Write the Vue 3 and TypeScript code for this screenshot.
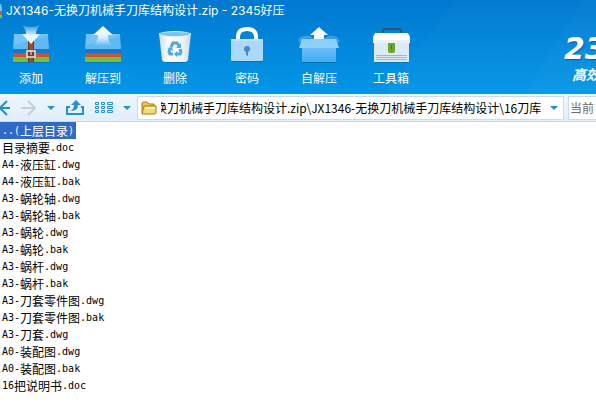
<script setup lang="ts">
import { nextTick, onMounted, ref } from 'vue'

interface Run {
  text: string
  latin: boolean
}

const tools = [
  { id: 'add', label: '添加' },
  { id: 'extract', label: '解压到' },
  { id: 'delete', label: '删除' },
  { id: 'password', label: '密码' },
  { id: 'sfx', label: '自解压' },
  { id: 'toolbox', label: '工具箱' },
]

const files = [
  '..(上层目录)',
  '目录摘要.doc',
  'A4-液压缸.dwg',
  'A4-液压缸.bak',
  'A3-蜗轮轴.dwg',
  'A3-蜗轮轴.bak',
  'A3-蜗轮.dwg',
  'A3-蜗轮.bak',
  'A3-蜗杆.dwg',
  'A3-蜗杆.bak',
  'A3-刀套零件图.dwg',
  'A3-刀套零件图.bak',
  'A3-刀套.dwg',
  'A0-装配图.dwg',
  'A0-装配图.bak',
  '16把说明书.doc',
]

// Latin runs get a half-width face so that two letters fill one Chinese cell
function runs(name: string): Run[] {
  return (name.match(/[\x00-\x7f]+|[^\x00-\x7f]+/g) ?? []).map((text) => ({
    text,
    latin: text.charCodeAt(0) < 128,
  }))
}

const selected = ref(0)
const path = ref('换刀机械手刀库结构设计.zip\\JX1346-无换刀机械手刀库结构设计\\16刀库')
const search = ref('')
const pathInput = ref<HTMLInputElement | null>(null)

// keep the deepest folder of the path in view
onMounted(async () => {
  await nextTick()
  if (pathInput.value) pathInput.value.scrollLeft = pathInput.value.scrollWidth
})
</script>

<template>
  <div class="window">
    <header class="banner">
      <svg class="sheen" viewBox="0 0 596 94" preserveAspectRatio="none" aria-hidden="true">
        <path d="M455 0H596V94H385Z" fill="#fff" opacity=".02" />
        <path d="M582 0H596V94H525Z" fill="#fff" opacity=".02" />
      </svg>
      <div class="title">
        <svg class="app-icon" width="2" height="14" viewBox="0 0 2 14" aria-hidden="true">
          <path d="M0 0h1l1 4v3H0z" fill="#6fc5f7" />
          <path d="M0 7h2v4H0z" fill="#c65b3c" />
          <path d="M0 11h2v3H0z" fill="#7fc43f" />
        </svg>
        <h1>JX1346-无换刀机械手刀库结构设计.zip - 2345好压</h1>
      </div>
      <div class="tools-row">
        <nav class="tools">
          <button v-for="tool in tools" :key="tool.id" type="button" class="tool">
            <svg width="48" height="44" viewBox="0 0 48 44" aria-hidden="true">
              <defs>
                <linearGradient id="arrowDown" x1="0" y1="0" x2="0" y2="1">
                  <stop offset="0" stop-color="#fff" stop-opacity=".15" />
                  <stop offset=".6" stop-color="#e8f6ff" />
                  <stop offset="1" stop-color="#fff" />
                </linearGradient>
                <linearGradient id="arrowUp" x1="0" y1="0" x2="0" y2="1">
                  <stop offset="0" stop-color="#fff" />
                  <stop offset=".5" stop-color="#e3f3fe" />
                  <stop offset="1" stop-color="#fff" stop-opacity=".1" />
                </linearGradient>
                <linearGradient id="bin" x1="0" y1="0" x2="1" y2="0">
                  <stop offset="0" stop-color="#d5dde5" />
                  <stop offset=".3" stop-color="#fbfdff" />
                  <stop offset=".75" stop-color="#eef3f8" />
                  <stop offset="1" stop-color="#cbd7e2" />
                </linearGradient>
                <linearGradient id="carton" x1="0" y1="0" x2="0" y2="1">
                  <stop offset="0" stop-color="#6cc0f8" />
                  <stop offset="1" stop-color="#43a9ef" />
                </linearGradient>
              </defs>

              <g v-if="tool.id === 'add' || tool.id === 'extract'">
                <path d="M6 40h36v1H6z" fill="#0567ae" opacity=".6" />
                <path d="M7 12h34l1 15H6z" fill="#5eb9f5" />
                <path d="M7 12h34v2L7 23z" fill="#8bd0fc" opacity=".5" />
                <path d="M6 27h36v4H6z" fill="#1479c9" />
                <path d="M6 31h36v4H6z" fill="#c65635" />
                <path d="M6 35h36v5H6z" fill="#78bd3c" />
              </g>

              <g v-if="tool.id === 'add'">
                <path d="M21 19h6v21h-6z" fill="#9a4c2b" />
                <path d="M21 19h1v21h-1zM26 19h1v21h-1z" fill="#743518" />
                <rect x="20" y="29" width="8" height="6" fill="#713c2c" stroke="#e7e7e7" stroke-width="1.5" />
                <path d="M24 29v4" stroke="#eee" stroke-width="1" />
                <path d="M15 3q4 2 9 2t9-2q-4 4-4 9h4l-9 10-9-10h4q0-5-4-9z" fill="url(#arrowDown)" />
              </g>

              <path
                v-else-if="tool.id === 'extract'"
                d="M24 4l10 9h-5q0 7 4 10H15q4-3 4-10h-5z"
                fill="url(#arrowUp)"
              />

              <g v-else-if="tool.id === 'delete'">
                <path d="M12 39h24l-2 2H14z" fill="#0862a6" opacity=".6" />
                <path d="M8 11h32l-3 27q-1 2-3 2H14q-2 0-3-2z" fill="url(#bin)" />
                <ellipse cx="24" cy="12" rx="16" ry="3" fill="#d9effb" />
                <ellipse cx="24" cy="12" rx="15" ry="2" fill="#74c6ee" />
                <g fill="none" stroke="#50a8e3" stroke-width="3">
                  <path d="M20 25l2-4h4l2 3" />
                  <path d="M29 27l1 3-1 2h-3" />
                  <path d="M22 32h-3l-1-2 1-3" />
                </g>
                <path d="M30 21v5h-5zM26 29v6l-3-3zM16 26l5-1 1 4z" fill="#50a8e3" />
              </g>

              <g v-else-if="tool.id === 'password'">
                <path d="M8 39h32v1H8z" fill="#0562a9" opacity=".6" />
                <path d="M15 18v-3q0-8 9-8t9 8v3" fill="none" stroke="#fff" stroke-width="4" />
                <rect x="8" y="17" width="32" height="22" rx="1" fill="#abd9fc" />
                <path d="M8 18h32" stroke="#d3ecff" stroke-width="1" />
                <circle cx="24" cy="27" r="3" fill="#4388ca" />
                <path d="M23 28h2v6l-2-1z" fill="#4388ca" />
              </g>

              <g v-else-if="tool.id === 'sfx'">
                <path d="M4 21q-2-6 5-7 6-2 10 3M44 21q1-6-5-7-6-2-10 3" fill="#4eabef" opacity=".7" />
                <path d="M24 5l9 8h-4v7H19v-7h-4z" fill="#f3faff" />
                <path d="M7 26h34v14H7z" fill="url(#carton)" />
                <path d="M7 40h34v1H7z" fill="#0562a9" opacity=".6" />
                <path d="M7 17h34l3 9H4z" fill="#8ed0fb" />
              </g>

              <g v-else>
                <path d="M16 12V9q0-2 2-2h14q2 0 2 2v3" fill="none" stroke="#30567b" stroke-width="2" />
                <path d="M7 20h35v20H7z" fill="#dce9f6" />
                <path d="M7 40h35v1H7z" fill="#0562a9" opacity=".6" />
                <path d="M8 11h33l2 4v6H6v-6z" fill="#fff" />
                <path d="M6 18h37v3H6z" fill="#e9f1fa" />
                <path d="M9 33.500h31M9 35.500h31M9 37.500h31" stroke="#a5b5c5" stroke-width="1" />
                <path d="M21 21h7v8q0 2-2 2h-3q-2 0-2-2z" fill="#67a929" />
                <path d="M24 23h1v4h-1z" fill="#3d7617" />
              </g>
            </svg>
            <span>{{ tool.label }}</span>
          </button>
        </nav>
        <div class="brand">
          <strong>23</strong>
          <em>高效</em>
        </div>
      </div>
    </header>

    <div class="address-bar">
      <button type="button" class="nav back" aria-label="后退">
        <svg width="16" height="20" viewBox="0 0 16 20">
          <path d="M10 10H1M7 3l-7 7 7 7" fill="none" stroke="#268fd2" stroke-width="2" />
        </svg>
      </button>
      <button type="button" class="nav forward" aria-label="前进">
        <svg width="16" height="20" viewBox="0 0 16 20">
          <path d="M1 10h13M8 3l7 7-7 7" fill="none" stroke="#c6cfd7" stroke-width="2" />
        </svg>
      </button>
      <button type="button" class="nav history" aria-label="历史">
        <svg width="8" height="4" viewBox="0 0 8 4"><path d="M0 0h8L4 4z" fill="#268fd2" /></svg>
      </button>
      <button type="button" class="nav up" aria-label="向上">
        <svg width="18" height="16" viewBox="0 0 18 16">
          <path d="M4 7H1v7h16V7h-2" fill="none" stroke="#268fd2" stroke-width="2" />
          <path d="M4 11q4-1 4-6H5l5-5 5 5h-3q0 6-8 6z" fill="#268fd2" />
        </svg>
      </button>
      <button type="button" class="nav view" aria-label="视图">
        <svg width="18" height="12" viewBox="0 0 18 12">
          <g fill="none" stroke="#268fd2" stroke-width="1">
            <path d="M.5 .5h3v2h-3zM.5 4.500h3v2h-3zM.5 8.500h3v2h-3z" />
            <path d="M6.500 .5h3v2h-3zM6.500 4.500h3v2h-3zM6.500 8.500h3v2h-3z" />
            <path d="M12.500 .5h5v2h-5zM12.500 4.500h5v2h-5zM12.500 8.500h5v2h-5z" />
          </g>
        </svg>
      </button>
      <button type="button" class="nav view-menu" aria-label="视图选项">
        <svg width="8" height="4" viewBox="0 0 8 4"><path d="M0 0h8L4 4z" fill="#268fd2" /></svg>
      </button>
      <div class="field path">
        <svg width="16" height="14" viewBox="0 0 16 14" aria-hidden="true">
          <path d="M1 12V2l1-1h4l2 2h5v9z" fill="#f0c650" stroke="#a67b21" />
          <path d="M1 13l2-8h12v7l-1 1z" fill="#f8d96c" stroke="#a67b21" />
          <path d="M4 6h10v2H4z" fill="#fff3b8" />
        </svg>
        <input ref="pathInput" v-model="path" type="text" aria-label="路径" />
        <button type="button" class="drop" aria-label="展开路径">
          <svg width="8" height="4" viewBox="0 0 8 4"><path d="M0 0h8L4 4z" fill="#268fd2" /></svg>
        </button>
      </div>
      <div class="field search">
        <input v-model="search" type="text" placeholder="当前" aria-label="搜索" />
      </div>
    </div>

    <ul class="files">
      <li v-for="(file, index) in files" :key="file">
        <button type="button" :class="{ selected: index === selected }" @click="selected = index">
          <span v-for="(run, i) in runs(file)" :key="i" :class="{ latin: run.latin }">{{ run.text }}</span>
        </button>
      </li>
    </ul>
  </div>
</template>

<style>
body {
  background: #fff;
}
</style>

<style scoped>
.window {
  min-height: 100vh;
  overflow: hidden;
  background: #fff;
  color: #000;
  font: 12px/16px Inter, 'Noto Sans CJK SC', sans-serif;
}

button,
input {
  margin: 0;
  padding: 0;
  border: 0;
  background: none;
  color: inherit;
  font: inherit;
}

svg {
  display: block;
  flex: none;
}

.banner {
  position: relative;
  overflow: hidden;
  box-sizing: border-box;
  padding-bottom: 7px;
  background: linear-gradient(#0079d0, #0496e7);
  color: #fff;
}

.sheen {
  position: absolute;
  inset: 0;
  width: 100%;
  height: 100%;
}

.title {
  position: relative;
  display: flex;
  align-items: center;
  gap: 4px;
  height: 22px;
}

h1 {
  margin: 0;
  font: inherit;
  white-space: nowrap;
}

.tools-row {
  position: relative;
  display: flex;
  justify-content: space-between;
}

.tools {
  display: flex;
  margin-left: -5px;
}

.tool {
  display: flex;
  flex-direction: column;
  align-items: center;
  gap: 5px;
  width: 72px;
}

.brand {
  display: flex;
  flex-direction: column;
  gap: 3px;
  width: 32px;
  padding-top: 13px;
  white-space: nowrap;
}

.brand strong {
  font: italic bold 30px/28px 'DejaVu Sans', sans-serif;
  text-shadow: 1px 1px 1px #0561a5;
}

.brand em {
  padding-left: 8px;
  font: italic bold 14px/16px 'Noto Sans CJK SC', sans-serif;
}

.address-bar {
  display: flex;
  align-items: center;
  box-sizing: border-box;
  height: 28px;
  border-bottom: 1px solid #c3d9ee;
  background: linear-gradient(#edf6fe, #e1eefb);
}

.nav {
  display: flex;
  flex: none;
  align-items: center;
  justify-content: center;
  height: 24px;
}

.back {
  width: 16px;
}

.forward {
  width: 24px;
}

.history {
  width: 22px;
}

.up {
  width: 26px;
}

.view {
  width: 32px;
}

.view-menu {
  width: 14px;
}

.field {
  display: flex;
  align-items: center;
  box-sizing: border-box;
  height: 24px;
  border: 1px solid #c9dced;
  background: #fff;
}

.path {
  flex: 1;
  gap: 4px;
  min-width: 0;
  margin-left: 3px;
  padding-left: 3px;
}

.field input {
  flex: 1;
  min-width: 0;
  outline: 0;
  font: 12px/18px 'Noto Sans CJK SC', sans-serif;
}

.drop {
  display: flex;
  flex: none;
  justify-content: center;
  width: 18px;
  padding: 8px 5px;
}

.search {
  flex: none;
  width: 28px;
  margin-left: 4px;
  padding-left: 1px;
  border-right: 0;
}

.search input::placeholder {
  color: #6d6d6d;
  opacity: 1;
}

.files {
  margin: 0;
  padding: 0;
  list-style: none;
}

.files li {
  display: flex;
  height: 17px;
}

.files button {
  display: flex;
  align-items: center;
  height: 17px;
  padding: 0 2px;
  font: 12px/16px 'Noto Sans CJK SC', sans-serif;
  white-space: nowrap;
}

.files .selected {
  background: #316ac5;
  color: #fff;
}

.files .latin {
  font: 10px/16px 'DejaVu Sans Mono', monospace;
}
</style>
